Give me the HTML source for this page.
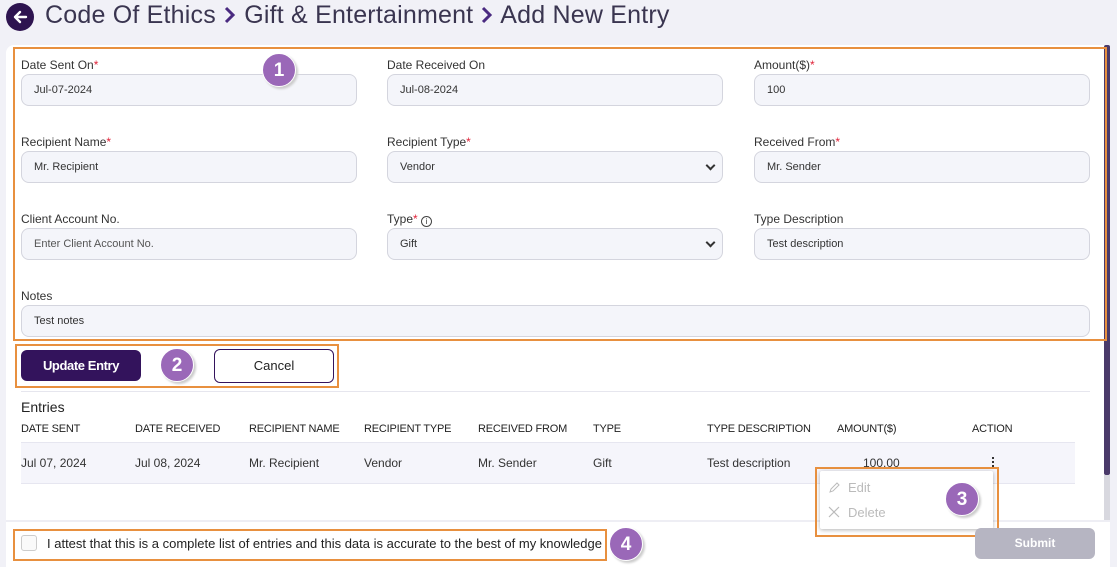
<!DOCTYPE html><html><head><style>
*{box-sizing:border-box;margin:0;padding:0}
body{width:1117px;height:567px;overflow:hidden;background:#f1f1f7;font-family:"Liberation Sans",sans-serif;position:relative;color:#222}
.a{position:absolute}
.card{left:6px;top:45px;width:1104px;height:475px;background:#fff;border-radius:8px 8px 0 0}
.lbl{font-size:12px;color:#333}
.lbl s{color:#e0243a;text-decoration:none}
.inp{height:32px;width:336px;background:#f4f5fa;border:1px solid #d4d5de;border-radius:8px;font-size:11px;color:#333;padding:9px 12px}
.sel::after{content:"";position:absolute;right:8px;top:10px;width:5px;height:5px;border-right:2px solid #333;border-bottom:2px solid #333;transform:rotate(45deg)}
.ob{border:2px solid #e8903f}
.badge{width:34px;height:34px;border-radius:50%;background:#9a68b8;color:#fff;font-weight:bold;font-size:19px;text-align:center;line-height:34px;box-shadow:2px 2px 2px #ccc;border:1px solid #fff}
.th{font-size:11px;color:#222;top:423px;letter-spacing:-0.2px}
.td{font-size:12px;color:#333;top:456px}
.dot{width:2px;height:2px;background:#333;left:992px}
</style></head><body>
<div class="a" style="left:6px;top:3px;width:28px;height:28px;border-radius:50%;background:#2e1450"></div>
<svg class="a" style="left:6px;top:3px" width="28" height="28"><path d="M20 14H9M14 9l-5 5 5 5" stroke="#fff" stroke-width="2.4" fill="none" stroke-linecap="round" stroke-linejoin="round"/></svg>
<div class="a" style="left:45px;top:1px;font-size:25px;letter-spacing:0.2px;color:#3a3550;white-space:nowrap">Code Of Ethics <svg width="14" height="18" style="vertical-align:-1px"><path d="M3 2l7 7-7 7" stroke="#4a2a80" stroke-width="3" fill="none"/></svg> Gift &amp; Entertainment <svg width="14" height="18" style="vertical-align:-1px"><path d="M3 2l7 7-7 7" stroke="#4a2a80" stroke-width="3" fill="none"/></svg> Add New Entry</div>
<div class="a card"></div>
<div class="a" style="left:1104px;top:45px;width:6px;height:430px;background:#4a3a6a;border-radius:2px"></div>
<div class="a" style="left:1104px;top:475px;width:6px;height:45px;background:#d8d8df"></div>
<div class="a ob" style="left:13px;top:47px;width:1094px;height:294px"></div>

<div class="a lbl" style="left:21px;top:58px">Date Sent On<s>*</s></div>
<div class="a inp" style="left:21px;top:74px">Jul-07-2024</div>
<div class="a lbl" style="left:387px;top:58px">Date Received On</div>
<div class="a inp" style="left:387px;top:74px">Jul-08-2024</div>
<div class="a lbl" style="left:754px;top:58px">Amount($)<s>*</s></div>
<div class="a inp" style="left:754px;top:74px">100</div>

<div class="a lbl" style="left:21px;top:135px">Recipient Name<s>*</s></div>
<div class="a inp" style="left:21px;top:151px">Mr. Recipient</div>
<div class="a lbl" style="left:387px;top:135px">Recipient Type<s>*</s></div>
<div class="a inp sel" style="left:387px;top:151px">Vendor</div>
<div class="a lbl" style="left:754px;top:135px">Received From<s>*</s></div>
<div class="a inp" style="left:754px;top:151px">Mr. Sender</div>

<div class="a lbl" style="left:21px;top:212px">Client Account No.</div>
<div class="a inp" style="left:21px;top:228px;color:#555">Enter Client Account No.</div>
<div class="a lbl" style="left:387px;top:212px">Type<s>*</s> <span style="display:inline-block;width:11px;height:11px;border:1px solid #444;border-radius:50%;font-size:8px;text-align:center;line-height:9px;vertical-align:-1px">i</span></div>
<div class="a inp sel" style="left:387px;top:228px">Gift</div>
<div class="a lbl" style="left:754px;top:212px">Type Description</div>
<div class="a inp" style="left:754px;top:228px">Test description</div>

<div class="a lbl" style="left:21px;top:289px">Notes</div>
<div class="a inp" style="left:21px;top:305px;width:1069px">Test notes</div>
<div class="a badge" style="left:262px;top:53px">1</div>

<div class="a ob" style="left:15px;top:344px;width:324px;height:44px"></div>
<div class="a" style="left:21px;top:350px;width:120px;height:31px;background:#33135c;border-radius:6px;color:#fff;font-weight:bold;font-size:13px;text-align:center;line-height:31px;letter-spacing:-0.4px">Update Entry</div>
<div class="a" style="left:214px;top:349px;width:120px;height:34px;border:1px solid #33135c;border-radius:6px;font-size:13px;text-align:center;line-height:32px">Cancel</div>
<div class="a badge" style="left:160px;top:348px">2</div>

<div class="a" style="left:21px;top:391px;width:1069px;height:1px;background:#e6e6ee"></div>
<div class="a" style="left:21px;top:399px;font-size:14px;color:#222">Entries</div>
<div class="a th" style="left:21px">DATE SENT</div><div class="a th" style="left:135px">DATE RECEIVED</div><div class="a th" style="left:249px">RECIPIENT NAME</div><div class="a th" style="left:364px">RECIPIENT TYPE</div><div class="a th" style="left:478px">RECEIVED FROM</div><div class="a th" style="left:593px">TYPE</div><div class="a th" style="left:707px">TYPE DESCRIPTION</div><div class="a th" style="left:837px">AMOUNT($)</div><div class="a th" style="left:972px">ACTION</div>
<div class="a" style="left:21px;top:442px;width:1054px;height:42px;background:#f5f5fb;border-top:1px solid #e6e6f0;border-bottom:1px solid #e6e6f0"></div>
<div class="a td" style="left:21px">Jul 07, 2024</div><div class="a td" style="left:135px">Jul 08, 2024</div><div class="a td" style="left:249px">Mr. Recipient</div><div class="a td" style="left:364px">Vendor</div><div class="a td" style="left:478px">Mr. Sender</div><div class="a td" style="left:593px">Gift</div><div class="a td" style="left:707px">Test description</div><div class="a td" style="left:863px">100.00</div>
<div class="a dot" style="top:457px"></div><div class="a dot" style="top:461px"></div><div class="a dot" style="top:465px"></div>

<div class="a" style="left:6px;top:520px;width:1104px;height:47px;background:#fff;border-top:2px solid #eeeef4"></div>

<div class="a ob" style="left:815px;top:467px;width:184px;height:70px"></div>
<div class="a" style="left:820px;top:471px;width:173px;height:58px;background:#fff;box-shadow:0 1px 4px rgba(0,0,0,.3);border-radius:2px"></div>
<svg class="a" style="left:828px;top:481px" width="13" height="13"><path d="M2 11l1-3 6-6 2 2-6 6z" stroke="#bbb" fill="none"/></svg>
<div class="a" style="left:848px;top:480px;font-size:13px;color:#bbb">Edit</div>
<svg class="a" style="left:828px;top:506px" width="12" height="12"><path d="M1 1l10 10M11 1L1 11" stroke="#bbb" stroke-width="1.2"/></svg>
<div class="a" style="left:848px;top:505px;font-size:13px;color:#bbb">Delete</div>
<div class="a badge" style="left:945px;top:482px">3</div>

<div class="a ob" style="left:13px;top:529px;width:594px;height:32px;background:#fff"></div>
<div class="a" style="left:21px;top:535px;width:16px;height:16px;border:1px solid #ccc;border-radius:3px;background:#fafafa"></div>
<div class="a" style="left:47px;top:536px;font-size:13px;color:#222;white-space:nowrap;letter-spacing:0">I attest that this is a complete list of entries and this data is accurate to the best of my knowledge</div>
<div class="a badge" style="left:609px;top:527px">4</div>
<div class="a" style="left:975px;top:528px;width:120px;height:31px;background:#b6b5c2;border-radius:6px;color:#fff;font-weight:bold;font-size:12px;text-align:center;line-height:31px">Submit</div>
</body></html>
